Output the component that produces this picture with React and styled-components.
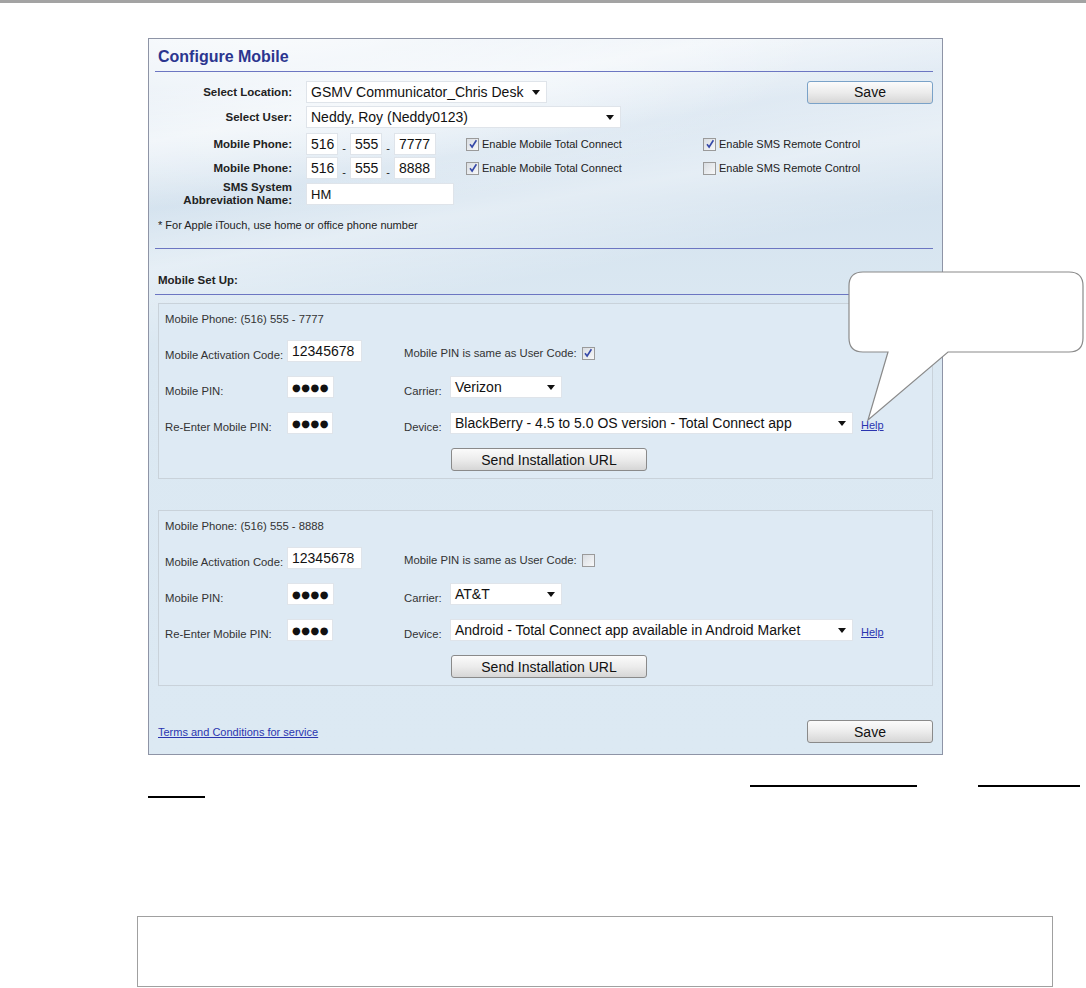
import styled, { createGlobalStyle } from "styled-components";

const GlobalStyle = createGlobalStyle`
  html, body {
    margin: 0;
    padding: 0;
    background: #ffffff;
  }
  body {
    font-family: "Liberation Sans", Arial, sans-serif;
    color: #222;
  }
`;

const Page = styled.div`
  position: relative;
  width: 1086px;
  height: 988px;
  overflow: hidden;
  background: #fff;
`;

const TopRule = styled.div`
  height: 3px;
  background: #a3a3a3;
`;

const Panel = styled.div`
  box-sizing: border-box;
  width: 795px;
  margin: 35px 0 0 148px;
  padding: 0 9px 11px 6px;
  border: 1px solid #8e94a6;
  background:
    radial-gradient(110% 45% at 15% -5%, rgba(255, 255, 255, 0.85), rgba(255, 255, 255, 0) 65%),
    linear-gradient(170deg, rgba(255, 255, 255, 0) 6%, rgba(255, 255, 255, 0.5) 12%, rgba(255, 255, 255, 0) 20%, rgba(255, 255, 255, 0.35) 27%, rgba(255, 255, 255, 0) 36%),
    linear-gradient(180deg, #e6eef6 0%, #d5e3ef 22%, #dbe8f2 38%, #dce9f3 100%);
`;

const Title = styled.div`
  margin: 9px 0 0 3px;
  height: 18px;
  line-height: 18px;
  font-size: 16px;
  font-weight: bold;
  color: #2b358f;
`;

const Divider = styled.div`
  height: 1px;
  margin-top: ${(p) => p.$top}px;
  background: #6c76c2;
`;

const TopForm = styled.div`
  margin-top: 9px;
  display: grid;
  grid-template-columns: 137px 1fr;
  grid-template-rows: 25px 27px 24px 26px 26px;
  column-gap: 14px;
  align-items: start;
`;

const Label = styled.div`
  display: flex;
  align-items: center;
  justify-content: flex-end;
  text-align: right;
  font-size: 11.5px;
  font-weight: bold;
  line-height: 13px;
  color: #222;
  height: 22px;
`;

const FieldRow = styled.div`
  display: flex;
  align-items: center;
  height: 22px;
`;

const Field = styled.div`
  box-sizing: border-box;
  width: ${(p) => p.$w}px;
  height: 22px;
  padding: 0 4px;
  display: flex;
  align-items: center;
  background: #fff;
  border: 1px solid #dfe4ea;
  font-size: ${(p) => p.$size || 14}px;
  color: #111;
  white-space: nowrap;
  overflow: hidden;
`;

const Dots = styled(Field)`
  font-family: "DejaVu Sans", sans-serif;
  font-size: 10px;
  letter-spacing: 0.5px;
`;

const SelectBox = styled(Field)`
  justify-content: space-between;
  padding-right: 6px;
`;

const Dash = styled.span`
  width: 12px;
  text-align: center;
  align-self: flex-end;
  font-size: 11px;
  line-height: 14px;
`;

const PhoneGroup = styled.div`
  display: flex;
  align-items: center;
  width: 160px;
`;

const CheckItem = styled.label`
  display: flex;
  align-items: center;
  gap: 3px;
  width: ${(p) => p.$w}px;
  font-size: 11px;
  color: #222;
`;

const Box = styled.span`
  box-sizing: border-box;
  width: 13px;
  height: 13px;
  border: 1px solid #9a9a9a;
  background: linear-gradient(135deg, #d9dde2, #f7f8f9);
  display: inline-flex;
  align-items: center;
  justify-content: center;
`;

const SaveButton = styled.button`
  box-sizing: border-box;
  margin-left: auto;
  width: 126px;
  height: 23px;
  padding: 0;
  border: 1px solid ${(p) => (p.$focus ? "#7aa2c8" : "#8a8a8a")};
  border-radius: 3px;
  background: linear-gradient(180deg, #fbfbfb 0%, #ececec 50%, #d6d6d6 100%);
  font-family: "Liberation Sans", Arial, sans-serif;
  font-size: 14px;
  color: #111;
`;

const SendButton = styled(SaveButton)`
  margin-left: 1px;
  width: 196px;
  border-color: #8a8a8a;
`;

const Note = styled.div`
  margin: 10px 0 0 3px;
  font-size: 11px;
  line-height: 13px;
  color: #222;
`;

const SectionTitle = styled.div`
  margin: 24px 0 0 3px;
  font-size: 11.5px;
  font-weight: bold;
  line-height: 14px;
  color: #222;
`;

const DeviceBox = styled.div`
  box-sizing: border-box;
  height: 176px;
  margin: ${(p) => p.$top}px 0 0 3px;
  padding: 9px 0 0 6px;
  border: 1px solid #c9d2da;
  background: #deeaf4;
`;

const PhoneLine = styled.div`
  font-size: 11.3px;
  line-height: 13px;
  color: #333;
`;

const DeviceGrid = styled.div`
  margin-top: 14px;
  display: grid;
  grid-template-columns: 122px 117px 46px auto;
  row-gap: 14px;
  align-items: center;
`;

const SmallLabel = styled.div`
  height: 22px;
  display: flex;
  align-items: flex-end;
  padding-bottom: 1px;
  box-sizing: border-box;
  font-size: 11.3px;
  color: #333;
  white-space: nowrap;
`;

const SameRow = styled.div`
  grid-column: 3 / span 2;
  display: flex;
  align-items: center;
  gap: 5px;
  font-size: 11.3px;
  color: #333;
  padding-top: 4px;
`;

const DeviceCell = styled.div`
  display: flex;
  align-items: center;
`;

const Link = styled.a`
  font-size: 11px;
  color: #2a35b0;
  text-decoration: underline;
  cursor: pointer;
`;

const HelpLink = styled(Link)`
  margin: 4px 0 0 8px;
`;

const ButtonCell = styled.div`
  grid-column: 4;
`;

const Footer = styled.div`
  margin: 34px 0 0 3px;
  display: flex;
  align-items: center;
`;

const DocLines = styled.div`
  margin-top: 20px;
  padding-left: 148px;
`;

const DocLine = styled.div`
  display: flex;
  align-items: flex-end;
  height: ${(p) => p.$h}px;
`;

const Underline = styled.span`
  display: block;
  width: ${(p) => p.$w}px;
  margin-left: ${(p) => p.$gap || 0}px;
  border-bottom: 2px solid #000;
`;

const NoteFrame = styled.div`
  box-sizing: border-box;
  width: 916px;
  height: 71px;
  margin: 118px 0 0 137px;
  border: 1px solid #a0a0a0;
  background: #fff;
`;

const Callout = styled.svg`
  position: absolute;
  left: 846px;
  top: 270px;
`;

function Arrow() {
  return (
    <svg width="8" height="5" viewBox="0 0 8 5">
      <path d="M0 0 H8 L4 5 Z" fill="#111" />
    </svg>
  );
}

function Check({ on }) {
  return (
    <Box>
      {on && (
        <svg width="10" height="10" viewBox="0 0 10 10">
          <path d="M2 5.2 L4.1 8 L8.4 1.2" fill="none" stroke="#3548a8" strokeWidth="1.6" />
        </svg>
      )}
    </Box>
  );
}

function Select({ w, children }) {
  return (
    <SelectBox $w={w}>
      <span>{children}</span>
      <Arrow />
    </SelectBox>
  );
}

function PhoneFields({ last }) {
  return (
    <PhoneGroup>
      <Field $w={32}>516</Field>
      <Dash>-</Dash>
      <Field $w={32}>555</Field>
      <Dash>-</Dash>
      <Field $w={42}>{last}</Field>
    </PhoneGroup>
  );
}

const devices = [
  {
    phone: "(516) 555 - 7777",
    same: true,
    carrier: "Verizon",
    device: "BlackBerry - 4.5 to 5.0 OS version - Total Connect app",
  },
  {
    phone: "(516) 555 - 8888",
    same: false,
    carrier: "AT&T",
    device: "Android - Total Connect app available in Android Market",
  },
];

function DeviceSetup({ item, top }) {
  return (
    <DeviceBox $top={top}>
      <PhoneLine>Mobile Phone: {item.phone}</PhoneLine>
      <DeviceGrid>
        <SmallLabel>Mobile Activation Code:</SmallLabel>
        <Field $w={75}>12345678</Field>
        <SameRow>
          Mobile PIN is same as User Code: <Check on={item.same} />
        </SameRow>

        <SmallLabel>Mobile PIN:</SmallLabel>
        <Dots $w={47}>●●●●</Dots>
        <SmallLabel>Carrier:</SmallLabel>
        <Select w={112}>{item.carrier}</Select>

        <SmallLabel>Re-Enter Mobile PIN:</SmallLabel>
        <Dots $w={46}>●●●●</Dots>
        <SmallLabel>Device:</SmallLabel>
        <DeviceCell>
          <Select w={403}>{item.device}</Select>
          <HelpLink>Help</HelpLink>
        </DeviceCell>

        <ButtonCell>
          <SendButton>Send Installation URL</SendButton>
        </ButtonCell>
      </DeviceGrid>
    </DeviceBox>
  );
}

export default function App() {
  return (
    <Page>
      <GlobalStyle />
      <TopRule />
      <Panel>
        <Title>Configure Mobile</Title>
        <Divider $top={5} />
        <TopForm>
          <Label>Select Location:</Label>
          <FieldRow>
            <Select w={241}>GSMV Communicator_Chris Desk</Select>
            <SaveButton $focus>Save</SaveButton>
          </FieldRow>

          <Label>Select User:</Label>
          <FieldRow>
            <Select w={315}>Neddy, Roy (Neddy0123)</Select>
          </FieldRow>

          <Label>Mobile Phone:</Label>
          <FieldRow>
            <PhoneFields last="7777" />
            <CheckItem $w={237}>
              <Check on /> Enable Mobile Total Connect
            </CheckItem>
            <CheckItem $w={200}>
              <Check on /> Enable SMS Remote Control
            </CheckItem>
          </FieldRow>

          <Label>Mobile Phone:</Label>
          <FieldRow>
            <PhoneFields last="8888" />
            <CheckItem $w={237}>
              <Check on /> Enable Mobile Total Connect
            </CheckItem>
            <CheckItem $w={200}>
              <Check /> Enable SMS Remote Control
            </CheckItem>
          </FieldRow>

          <Label>
            SMS System
            <br />
            Abbreviation Name:
          </Label>
          <FieldRow>
            <Field $w={148} $size={13}>HM</Field>
          </FieldRow>
        </TopForm>
        <Note>* For Apple iTouch, use home or office phone number</Note>
        <Divider $top={16} />
        <SectionTitle>Mobile Set Up:</SectionTitle>
        <Divider $top={7} />
        <DeviceSetup item={devices[0]} top={8} />
        <DeviceSetup item={devices[1]} top={31} />
        <Footer>
          <Link>Terms and Conditions for service</Link>
          <SaveButton>Save</SaveButton>
        </Footer>
      </Panel>

      <DocLines>
        <DocLine $h={12}>
          <Underline $w={167} $gap={602} />
          <Underline $w={102} $gap={61} />
        </DocLine>
        <DocLine $h={11}>
          <Underline $w={57} />
        </DocLine>
      </DocLines>

      <NoteFrame />

      <Callout width="240" height="152" viewBox="0 0 240 152">
        <path
          d="M17 2 H223 Q237 2 237 16 V68 Q237 82 223 82 H102 L22 150 L42 82 H17 Q3 82 3 68 V16 Q3 2 17 2 Z"
          fill="#ffffff"
          stroke="#8a8a8a"
          strokeWidth="1.2"
        />
      </Callout>
    </Page>
  );
}
